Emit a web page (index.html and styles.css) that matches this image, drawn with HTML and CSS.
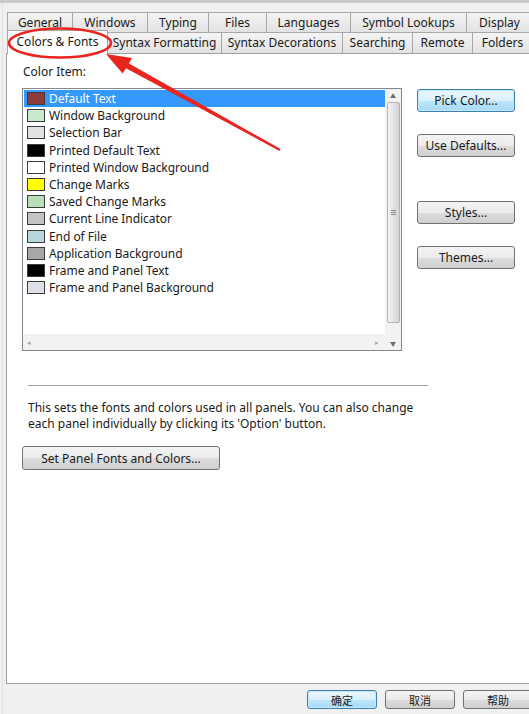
FILE: index.html
```html
<!DOCTYPE html>
<html>
<head>
<meta charset="utf-8">
<link rel="stylesheet" href="styles.css">
</head>
<body>
<div class="window">
  <div class="tabs">
    <div class="tabrow row1">
      <div class="tab w-general">General</div>
      <div class="tab w-windows">Windows</div>
      <div class="tab w-typing">Typing</div>
      <div class="tab w-files">Files</div>
      <div class="tab w-languages">Languages</div>
      <div class="tab w-symbol">Symbol Lookups</div>
      <div class="tab w-display">Display</div>
    </div>
    <div class="tabrow row2">
      <div class="tab selected w-colors">Colors &amp; Fonts</div>
      <div class="tab w-synfmt">Syntax Formatting</div>
      <div class="tab w-syndec">Syntax Decorations</div>
      <div class="tab w-search">Searching</div>
      <div class="tab w-remote">Remote</div>
      <div class="tab w-folders">Folders</div>
    </div>
  </div>
  <div class="panel">
    <div class="label">Color Item:</div>
    <div class="content">
      <div class="listbox">
        <div class="listarea">
          <div class="items">
            <div class="item sel"><span class="sw c1"></span>Default Text</div>
            <div class="item"><span class="sw c2"></span>Window Background</div>
            <div class="item"><span class="sw c3"></span>Selection Bar</div>
            <div class="item"><span class="sw c4"></span>Printed Default Text</div>
            <div class="item"><span class="sw c5"></span>Printed Window Background</div>
            <div class="item"><span class="sw c6"></span>Change Marks</div>
            <div class="item"><span class="sw c7"></span>Saved Change Marks</div>
            <div class="item"><span class="sw c8"></span>Current Line Indicator</div>
            <div class="item"><span class="sw c9"></span>End of File</div>
            <div class="item"><span class="sw c10"></span>Application Background</div>
            <div class="item"><span class="sw c11"></span>Frame and Panel Text</div>
            <div class="item"><span class="sw c12"></span>Frame and Panel Background</div>
          </div>
          <div class="hscroll">
            <span class="arr">&#9666;</span>
            <span class="arr">&#9656;</span>
          </div>
        </div>
        <div class="vscroll">
          <div class="vbtn">&#9650;</div>
          <div class="thumb"><span class="grip"></span></div>
          <div class="vbtn">&#9660;</div>
        </div>
      </div>
      <div class="side">
        <div class="btn default b-pick">Pick Color...</div>
        <div class="btn b-use">Use Defaults...</div>
        <div class="btn b-styles">Styles...</div>
        <div class="btn b-themes">Themes...</div>
      </div>
    </div>
    <div class="sep"></div>
    <p class="desc">This sets the fonts and colors used in all panels. You can also change<br>each panel individually by clicking its 'Option' button.</p>
    <div class="btn b-panel">Set Panel Fonts and Colors...</div>
  </div>
  <div class="footer">
    <div class="btn fbtn default">确定</div>
    <div class="btn fbtn">取消</div>
    <div class="btn fbtn">帮助</div>
  </div>
  <svg class="annot" width="529" height="714" viewBox="0 0 529 714">
    <ellipse cx="60" cy="43" rx="51" ry="14.5" fill="none" stroke="#e8251f" stroke-width="2.6"/>
    <polygon fill="#e8251f" points="106,54 132,58 129,63.6 280.6,149 279.4,151 126,68.2 122.6,73.4"/>
  </svg>
</div>
</body>
</html>
```
FILE: styles.css
```css
* { box-sizing: border-box; }
html, body { margin: 0; padding: 0; }
body {
  width: 529px;
  height: 714px;
  overflow: hidden;
  background: #f0f0f0;
  font-family: "Noto Sans", "Noto Sans CJK SC", sans-serif;
  font-size: 12px;
  color: #1a1a1a;
}
.window {
  position: relative;
  width: 529px;
  height: 714px;
  border-top: 3px solid #c9c9c9;
  padding-left: 6px;
  background: linear-gradient(90deg, #f0f0f0 2px, #e2e2e2 2px, #e2e2e2 3px, #f0f0f0 3px);
}
.tabs {
  padding-top: 9px;
  padding-left: 1px;
}
.tabrow {
  display: flex;
  white-space: nowrap;
}
.row1 { height: 20px; }
.row2 { height: 21px; }
.tab {
  height: 100%;
  display: flex;
  align-items: center;
  justify-content: center;
  border: 1px solid #a8a8a8;
  border-bottom: none;
  border-left: none;
  background: linear-gradient(#f4f4f4, #e2e2e2);
  line-height: 1;
  flex: none;
}
.row1 .tab:first-child, .row2 .tab:first-child { border-left: 1px solid #a8a8a8; }
.tab.selected {
  background: #fff;
  height: 24px;
  margin-top: -2px;
  position: relative;
  z-index: 1;
  margin-bottom: -1px;
  padding-bottom: 2px;
}
.w-general { width: 66px; }
.w-windows { width: 75px; }
.w-typing { width: 61px; }
.w-files { width: 58px; }
.w-languages { width: 84px; }
.w-symbol { width: 116px; }
.w-display { width: 66px; }
.w-colors { width: 101px; }
.w-synfmt { width: 114px; }
.w-syndec { width: 121px; }
.w-search { width: 70px; }
.w-remote { width: 60px; }
.w-folders { width: 60px; }

.panel {
  background: #fff;
  border: 1px solid #a0a0a0;
  border-right: none;
  height: 631px;
  padding: 11px 0 0 15px;
}
.label { height: 14px; line-height: 14px; margin-left: 1px; }
.content {
  display: flex;
  margin-top: 9px;
}
.listbox {
  width: 380px;
  height: 263px;
  border: 1px solid #828790;
  display: flex;
  flex: none;
}
.listarea {
  flex: 1;
  display: flex;
  flex-direction: column;
}
.items {
  flex: 1;
  padding: 1px 0 0 1px;
}
.item {
  height: 17.2px;
  display: flex;
  align-items: center;
  padding-left: 3px;
  white-space: nowrap;
  letter-spacing: -0.05px;
}
.item.sel { background: #3399ff; color: #fff; }
.sw {
  width: 18px;
  height: 13px;
  border: 1px solid #3c3c3c;
  margin-right: 4px;
  flex: none;
}
.c1 { background: #8d3b3d; }
.c2 { background: #c9e8cc; }
.c3 { background: #e2e2e2; }
.c4 { background: #000; }
.c5 { background: #fff; }
.c6 { background: #ffff00; }
.c7 { background: #b9ddb8; }
.c8 { background: #c3c3c3; }
.c9 { background: #b6d6dc; }
.c10 { background: #a7a7a7; }
.c11 { background: #000; }
.c12 { background: #dde0e8; }
.hscroll {
  height: 16px;
  background: #f2f2f2;
  display: flex;
  justify-content: space-between;
  align-items: center;
  padding: 0 6px 0 4px;
  font-size: 7px;
  color: #a5a5a5;
}
.vscroll {
  width: 16px;
  background: #f2f2f2;
  display: flex;
  flex-direction: column;
  align-items: center;
}
.vbtn {
  height: 13px;
  font-size: 6px;
  color: #6a6a6a;
  display: flex;
  align-items: center;
  justify-content: center;
}
.thumb {
  flex: 1;
  width: 13px;
  margin: 0 0 14px;
  border: 1px solid #b4b4b4;
  border-radius: 2px;
  background: linear-gradient(90deg, #f5f5f5, #e0e0e0 60%, #d2d2d2);
  display: flex;
  align-items: center;
  justify-content: center;
}
.grip {
  width: 5px;
  height: 5px;
  border-top: 1px solid #888;
  border-bottom: 1px solid #888;
  position: relative;
}
.grip::after {
  content: "";
  position: absolute;
  left: 0; right: 0; top: 1px;
  border-top: 1px solid #888;
}
.side {
  display: flex;
  flex-direction: column;
  margin-left: 15px;
  padding-top: 1px;
}
.btn {
  width: 98px;
  height: 23px;
  border: 1px solid #707070;
  border-radius: 3px;
  background: linear-gradient(#f3f3f3, #ebebeb 50%, #dddddd 51%, #cfcfcf);
  display: flex;
  align-items: center;
  justify-content: center;
  white-space: nowrap;
  color: #1a1a1a;
}
.btn.default {
  border-color: #3c7fb1;
  background: linear-gradient(#eaf6fd, #d9f0fc 50%, #bee6fd 51%, #a7d9f5);
  box-shadow: inset 0 0 0 1px #c4eaf9;
}
.b-use { margin-top: 22px; }
.b-styles { margin-top: 44px; }
.b-themes { margin-top: 22px; }
.sep {
  width: 400px;
  height: 2px;
  border-top: 1px solid #a0a0a0;
  border-bottom: 1px solid #fff;
  margin: 34px 0 0 6px;
}
.desc {
  margin: 13px 0 0 6px;
  line-height: 16px;
}
.b-panel {
  width: 198px;
  height: 24px;
  margin: 14px 0 0 0;
}
.footer {
  display: flex;
  justify-content: flex-end;
  padding-top: 6px;
  margin-right: -4px;
  gap: 8px;
}
.fbtn {
  width: 70px;
  height: 19px;
  font-size: 11px;
}
.annot {
  position: absolute;
  left: 0;
  top: -3px;
  z-index: 2;
  pointer-events: none;
}
```
